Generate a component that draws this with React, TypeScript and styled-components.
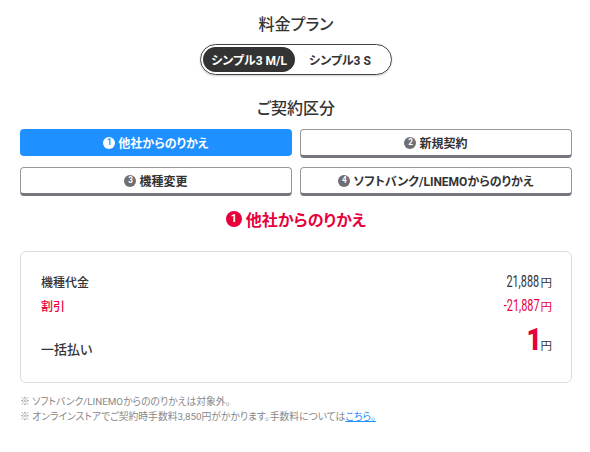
import styled, { createGlobalStyle } from "styled-components";

const GlobalStyle = createGlobalStyle`
  body {
    margin: 0;
    background: #fff;
    color: #333;
    font-family: Roboto, "Noto Sans CJK JP", sans-serif;
    font-feature-settings: "palt";
  }
`;

const plans = ["シンプル3 M/L", "シンプル3 S"];

const contracts = [
  { no: 1, label: "他社からのりかえ" },
  { no: 2, label: "新規契約" },
  { no: 3, label: "機種変更" },
  { no: 4, label: "ソフトバンク/LINEMOからのりかえ" },
];

const App = () => {
  const selected = 1;
  return (
    <Page>
      <GlobalStyle />
      <Heading>料金プラン</Heading>
      <ToggleWrap>
        <Toggle>
          {plans.map((p, i) => (
            <ToggleItem key={p} $active={i === 0}>
              {p}
            </ToggleItem>
          ))}
        </Toggle>
      </ToggleWrap>

      <SectionHeading>ご契約区分</SectionHeading>
      <ButtonGrid>
        {contracts.map((c) => (
          <ChoiceButton key={c.no} $active={c.no === selected}>
            <Badge $variant={c.no === selected ? "inverse" : "gray"}>{c.no}</Badge>
            {c.label}
          </ChoiceButton>
        ))}
      </ButtonGrid>

      <SelectedTitle>
        <Badge $variant="red" $size={16}>
          1
        </Badge>
        他社からのりかえ
      </SelectedTitle>

      <PriceCard>
        <PriceRow>
          <RowLabel>機種代金</RowLabel>
          <Amount>
            <Num>21,888</Num>
            <Yen>円</Yen>
          </Amount>
        </PriceRow>
        <PriceRow $red>
          <RowLabel>割引</RowLabel>
          <Amount>
            <Num>-21,887</Num>
            <Yen>円</Yen>
          </Amount>
        </PriceRow>
        <TotalRow>
          <TotalLabel>一括払い</TotalLabel>
          <TotalAmount>
            <BigNum>1</BigNum>
            <Yen>円</Yen>
          </TotalAmount>
        </TotalRow>
      </PriceCard>

      <Notes>
        <Note>※ ソフトバンク/LINEMOからののりかえは対象外。</Note>
        <Note>
          ※ オンラインストアでご契約時手数料3,850円がかかります。手数料については
          <NoteLink href="#">こちら。</NoteLink>
        </Note>
      </Notes>
    </Page>
  );
};

export default App;

const Page = styled.div`
  width: 590px;
  box-sizing: border-box;
  padding: 13px 18px 0 20px;
`;

const Heading = styled.h2`
  margin: 0;
  text-align: center;
  font-size: 16px;
  line-height: 24px;
  font-weight: 500;
  color: #333;
`;

const SectionHeading = styled(Heading)`
  margin-top: 22px;
`;

const ToggleWrap = styled.div`
  display: flex;
  justify-content: center;
  margin-top: 7px;
`;

const Toggle = styled.div`
  display: flex;
  align-items: center;
  gap: 6px;
  padding: 2px 12px 2px 2px;
  border: 1px solid #444;
  border-radius: 16px;
  box-shadow: 0 1px 2px rgba(0, 0, 0, 0.2);
`;

const ToggleItem = styled.span<{ $active?: boolean }>`
  display: inline-flex;
  align-items: center;
  height: 25px;
  padding: 0 8px;
  border-radius: 13px;
  font-size: 12px;
  font-weight: 700;
  background: ${(p) => (p.$active ? "#333" : "transparent")};
  color: ${(p) => (p.$active ? "#fff" : "#333")};
`;

const ButtonGrid = styled.div`
  display: grid;
  grid-template-columns: 1fr 1fr;
  column-gap: 8px;
  row-gap: 9px;
  margin-top: 8px;
`;

const ChoiceButton = styled.div<{ $active?: boolean }>`
  display: flex;
  align-items: center;
  justify-content: center;
  gap: 3px;
  height: 29px;
  box-sizing: border-box;
  border-radius: 4px;
  font-size: 12px;
  font-weight: 700;
  ${(p) =>
    p.$active
      ? `
    background: #1e90ff;
    color: #fff;
    height: 27px;
    margin-bottom: 2px;
  `
      : `
    background: #fff;
    color: #333;
    border: 1px solid #999;
    border-bottom: 3px solid #75757d;
  `}
`;

const badgeColors = {
  inverse: { bg: "#fff", fg: "#1e90ff" },
  gray: { bg: "#6e6e73", fg: "#fff" },
  red: { bg: "#e6003c", fg: "#fff" },
};

const Badge = styled.span<{ $variant: keyof typeof badgeColors; $size?: number }>`
  display: inline-flex;
  align-items: center;
  justify-content: center;
  width: ${(p) => p.$size ?? 12}px;
  height: ${(p) => p.$size ?? 12}px;
  border-radius: 50%;
  font-family: Roboto, sans-serif;
  font-size: ${(p) => ((p.$size ?? 12) * 0.68).toFixed(1)}px;
  font-weight: 700;
  line-height: 1;
  background: ${(p) => badgeColors[p.$variant].bg};
  color: ${(p) => badgeColors[p.$variant].fg};
`;

const SelectedTitle = styled.div`
  display: flex;
  align-items: center;
  justify-content: center;
  gap: 4px;
  margin-top: 11px;
  height: 24px;
  font-size: 16px;
  font-weight: 700;
  color: #e6003c;
`;

const PriceCard = styled.div`
  margin-top: 20px;
  border: 1px solid #dcdcdc;
  border-radius: 6px;
  padding: 19px 19px 16px 20px;
  display: flex;
  flex-direction: column;
  gap: 4px;
`;

const PriceRow = styled.div<{ $red?: boolean }>`
  display: flex;
  align-items: center;
  justify-content: space-between;
  height: 20px;
  color: ${(p) => (p.$red ? "#e6003c" : "#333")};
`;

const TotalRow = styled(PriceRow)`
  height: 36px;
  margin-top: 11px;
`;

const RowLabel = styled.span`
  font-size: 12px;
  font-weight: 500;
`;

const TotalLabel = styled(RowLabel)`
  font-size: 13px;
`;

const Amount = styled.span`
  display: inline-flex;
  align-items: baseline;
`;

const TotalAmount = styled(Amount)`
  align-self: flex-start;
`;

const Num = styled.span`
  display: inline-block;
  font-family: Roboto, sans-serif;
  font-size: 16px;
  transform: scaleX(0.68);
  transform-origin: right center;
`;

const BigNum = styled.span`
  display: inline-block;
  font-family: Roboto, sans-serif;
  font-size: 31px;
  font-weight: 900;
  color: #e6003c;
  line-height: 19px;
  letter-spacing: -2px;
  transform: scaleX(0.85);
  transform-origin: right center;
`;

const Yen = styled.span`
  font-size: 11.5px;
  margin-left: 1px;
`;

const Notes = styled.div`
  margin-top: 11px;
`;

const Note = styled.p`
  margin: 0;
  font-size: 9.8px;
  line-height: 15px;
  color: #888;
`;

const NoteLink = styled.a`
  color: #1e90ff;
  text-decoration: underline;
`;
